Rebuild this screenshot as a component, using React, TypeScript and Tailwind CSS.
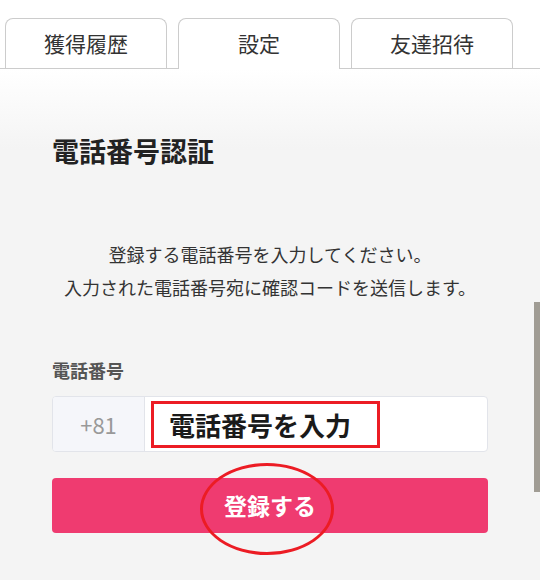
import React from 'react';

const FONT = { fontFamily: '"Noto Sans CJK JP", "Noto Sans", sans-serif' };

const tabs = ['獲得履歴', '設定', '友達招待'];

const App: React.FC = () => {
    const active = 1;

    return (
        <div className="relative w-[540px] h-[580px] overflow-hidden bg-[#f4f4f4]" style={FONT}>
            <div className="bg-white pt-[18px] pl-[5px] flex gap-[11px] border-b border-[#cccccc]">
                {tabs.map((t, i) => (
                    <div
                        key={t}
                        className={`w-[162px] h-[50px] rounded-t-[8px] border border-b-0 border-[#cccccc] bg-white flex items-center justify-center text-[21px] text-[#333333] ${i === active ? '-mb-px h-[51px]' : ''}`}
                    >
                        {t}
                    </div>
                ))}
            </div>

            <div className="bg-[linear-gradient(#ffffff,#f4f4f4_80px)] px-[52px] pt-[64px] h-[511px]">
                <h2 className="text-[27px] font-bold text-[#222222] leading-[36px]">電話番号認証</h2>

                <div className="mt-[69px] text-center text-[18px] leading-[33px] text-[#333333]">
                    <p>登録する電話番号を入力してください。</p>
                    <p>入力された電話番号宛に確認コードを送信します。</p>
                </div>

                <label className="block mt-[53px] text-[18px] font-bold text-[#555555] leading-[26px]">電話番号</label>

                <div className="mt-[13px] flex h-[56px] rounded-[4px] border border-[#e2e4ea] bg-white overflow-hidden">
                    <div className="w-[92px] shrink-0 bg-[#f5f6fa] border-r border-[#e2e4ea] flex items-center justify-center text-[22px] text-[#999999]">
                        +81
                    </div>
                    <div className="flex-1 flex items-center pl-[6px]">
                        <div className="w-[229px] h-[47px] border-[3px] border-[#ec1c24] flex items-center pl-[15px] text-[26px] font-bold text-[#1a1a1a]">
                            電話番号を入力
                        </div>
                    </div>
                </div>

                <div className="relative mt-[26px]">
                    <button className="w-full h-[55px] rounded-[4px] bg-[#ef3b70] text-white text-[23px] font-bold flex items-center justify-center">
                        登録する
                    </button>
                    <div className="absolute left-[148px] top-[-15px] w-[134px] h-[92px] rounded-[50%] border-[3px] border-[#ec1c24] pointer-events-none" />
                </div>
            </div>

            <div className="absolute right-0 top-[302px] w-[6px] h-[190px] bg-[#a09c94]" />
        </div>
    );
};

export default App;
